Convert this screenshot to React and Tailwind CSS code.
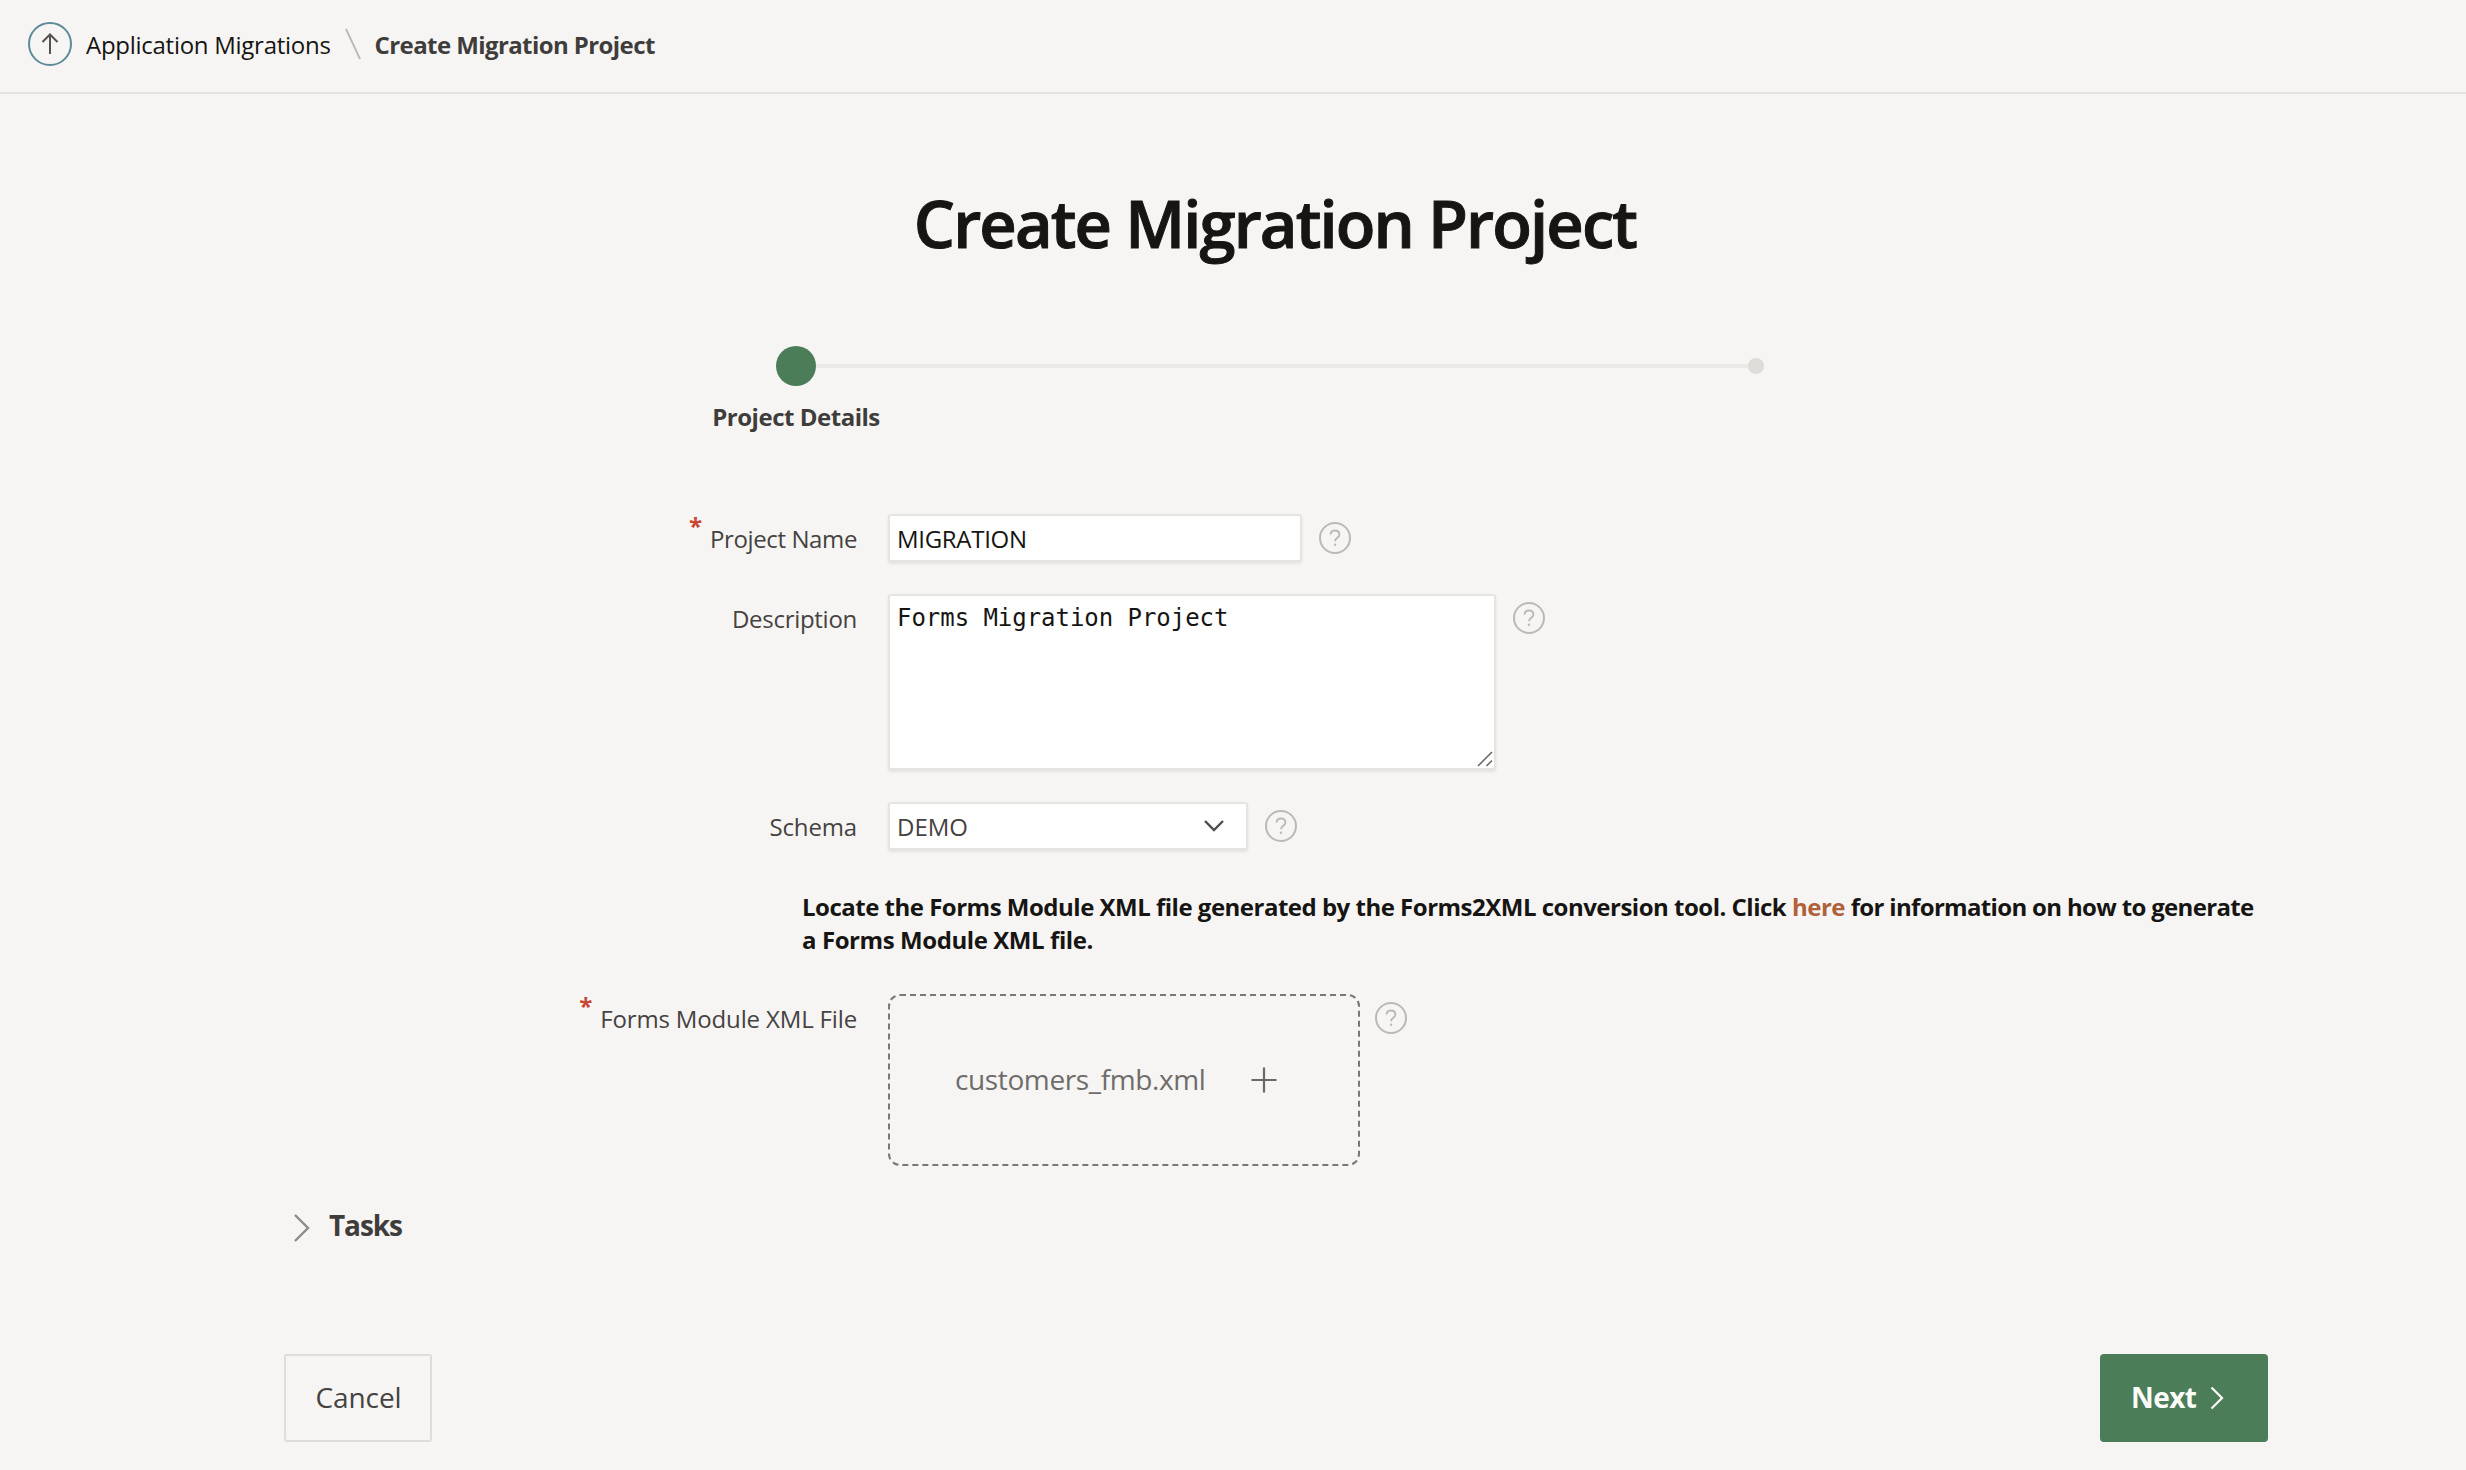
function HelpIcon({ className = "" }) {
  return (
    <svg viewBox="0 0 32 32" className={"mt-2 size-8 shrink-0 text-[#bcb9b5] " + className} fill="none" stroke="currentColor">
      <circle cx="16" cy="16" r="15" strokeWidth="2" />
      <path d="M11.6 12.6c0-2.5 1.9-4.1 4.4-4.1s4.4 1.6 4.4 4c0 3.2-4.4 3.2-4.4 6.7" strokeWidth="1.9" />
      <circle cx="16" cy="22.8" r="1.2" fill="currentColor" stroke="none" />
    </svg>
  );
}

function Row({ label, required, spacing, className = "", children }) {
  return (
    <div className={"flex items-start " + className}>
      <div className="mr-[31px] flex w-[573px] justify-end">
        {required && <span className="-mt-1 mr-2 text-2xl leading-8 font-bold text-[#c74634]">*</span>}
        <label className={"mt-[9px] text-2xl leading-8 text-[#454341] " + spacing}>{label}</label>
      </div>
      {children}
    </div>
  );
}

const field = "rounded-[3px] border-2 border-[#e6e4e1] bg-white shadow-[0_2px_3px_rgba(0,0,0,0.07)]";

export default function App() {
  return (
    <div className="flex h-[1470px] w-[2466px] flex-col overflow-hidden bg-[#f6f5f3] font-['Open_Sans','Noto_Sans',sans-serif] text-[#161513]">
      <header className="flex h-[94px] shrink-0 items-center border-b-2 border-[#e5e3e1] pb-1 pl-7">
        <svg viewBox="0 0 44 44" className="size-11" fill="none">
          <circle cx="22" cy="22" r="21" stroke="#5f8b98" strokeWidth="2" />
          <path d="M22 32V12.5M14.5 20L22 12.5L29.5 20" stroke="#55524f" strokeWidth="2" />
        </svg>
        <a className="ml-[14px] pt-0.5 text-2xl leading-8 tracking-[-0.27px]">Application Migrations</a>
        <svg viewBox="0 0 16 32" className="ml-[14px] h-8 w-4" fill="none">
          <path d="M1 1L15 31" stroke="#bab7b4" strokeWidth="1.8" />
        </svg>
        <span className="ml-[14px] pt-0.5 text-2xl leading-8 font-bold tracking-[-0.59px] text-[#3f3d3b]">Create Migration Project</span>
      </header>

      <main className="mx-auto flex w-[1984px] translate-x-[43px] flex-col">
        <h1 className="mt-[89px] pr-[2px] text-center text-[65px] leading-[80px] font-semibold tracking-[-1.87px] [-webkit-text-stroke:1px_#161513]">Create Migration Project</h1>

        <div className="mt-[83px] ml-[492px] flex w-[988px] items-center">
          <span className="size-10 rounded-full bg-[#4b7d58]" />
          <span className="h-1 flex-1 bg-[#eae9e5]" />
          <span className="size-4 rounded-full bg-[#dedcd9]" />
        </div>
        <div className="mt-[15px] ml-[392px] w-[240px] text-center text-2xl leading-8 font-bold tracking-[-0.48px] text-[#3f3d3b]">Project Details</div>

        <Row label="Project Name" required spacing="tracking-[-0.38px]" className="mt-[81px] h-20">
          <div className={field + " h-12 w-[414px] pt-[7px] pl-[7px] text-2xl leading-8 tracking-[-0.3px]"}>MIGRATION</div>
          <HelpIcon className="ml-[17px]" />
        </Row>
        <Row label="Description" spacing="tracking-[-0.28px]" className="h-[208px]">
          <div className={field + " flex h-[176px] w-[608px] items-start justify-between pt-[6px] pl-[7px] font-['DejaVu_Sans_Mono',monospace] text-2xl leading-8 tracking-[-0.04px]"}>
            Forms Migration Project
            <svg viewBox="0 0 16 16" className="mr-px mb-px size-4 self-end" stroke="#6d6b69" strokeWidth="1.6">
              <path d="M1 15L15 1M9.5 15L15 9.5" />
            </svg>
          </div>
          <HelpIcon className="ml-[17px]" />
        </Row>
        <Row label="Schema" spacing="tracking-[-0.15px]" className="h-[88px]">
          <div className={field + " flex h-12 w-[360px] items-start justify-between pt-[7px] pr-[21px] pl-[7px] text-2xl leading-8 text-[#454341]"}>
            DEMO
            <svg viewBox="0 0 22 14" className="mt-[8px] h-[14px] w-[22px]" fill="none" stroke="#4f4d4b" strokeWidth="2.4">
              <path d="M2 2L11 11L20 2" />
            </svg>
          </div>
          <HelpIcon className="ml-[17px]" />
        </Row>

        <p className="ml-[518px] h-[104px] w-[1458px] text-2xl leading-[33px] font-bold tracking-[-0.5px]">
          Locate the Forms Module XML file generated by the Forms2XML conversion tool. Click <a className="text-[#b0603a]">here</a> <span className="tracking-[-0.67px]">for information on how to generate</span> <span className="tracking-[-0.42px]">a Forms Module XML file.</span>
        </p>

        <Row label="Forms Module XML File" required spacing="tracking-[-0.15px]">
          <div className="flex h-[172px] w-[472px] items-center rounded-xl border-2 border-dashed border-[#7a7876] pl-[65px] text-[28px] leading-10 tracking-[-0.38px] text-[#6f6d6b]">
            <span className="-mt-[3px]">customers_fmb.xml</span>
            <svg viewBox="0 0 26 26" className="ml-[46px] size-[26px]" stroke="#6a6866" strokeWidth="2.2">
              <path d="M13 0.5V25.5M0.5 13H25.5" />
            </svg>
          </div>
          <HelpIcon className="ml-[15px]" />
        </Row>

        <div className="mt-[39px] flex h-10 items-start pl-[9px]">
          <svg viewBox="0 0 18 30" className="mt-2 h-[30px] w-[18px]" fill="none" stroke="#8d8b89" strokeWidth="2.4">
            <path d="M2 2L15 15L2 28" />
          </svg>
          <span className="ml-[18px] text-[28px] leading-10 font-bold tracking-[-1.1px] text-[#3f3d3b]">Tasks</span>
        </div>

        <div className="mt-[109px] flex justify-between">
          <button className="h-[88px] w-[148px] rounded-[3px] border-2 border-[#dfddda] pb-0.5 pl-px text-[28px] leading-10 tracking-[-0.1px] text-[#454341]">Cancel</button>
          <button className="flex h-[88px] w-[168px] items-center rounded-[4px] bg-[#4b7d58] pl-[31px] text-[28px] leading-10 font-bold tracking-[-0.58px] text-[#fcfbfa]">
            <span className="pb-0.5">Next</span>
            <svg viewBox="0 0 14 24" className="ml-[14px] h-6 w-[14px]" fill="none" stroke="currentColor" strokeWidth="2.2">
              <path d="M1.5 1.5L12 12L1.5 22.5" />
            </svg>
          </button>
        </div>
      </main>
    </div>
  );
}
